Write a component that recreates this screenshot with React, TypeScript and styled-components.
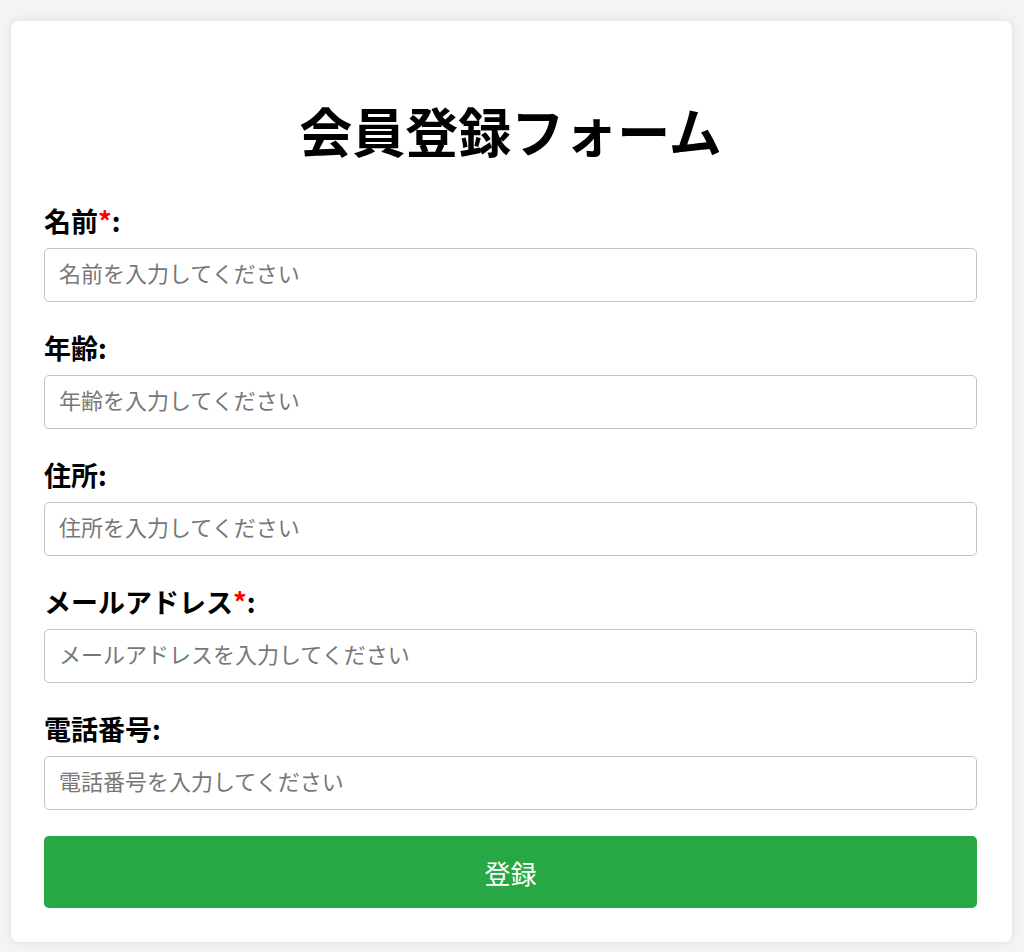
import React from 'react';
import styled, { createGlobalStyle } from 'styled-components';

const GlobalStyle = createGlobalStyle`
  body {
    margin: 0;
    background-color: #f4f4f4;
    font-family: "Noto Sans CJK JP", "Noto Sans", sans-serif;
    color: #000;
  }
`;

const Card = styled.div`
  box-sizing: border-box;
  width: 1001px;
  margin: 21px 12px 10px 11px;
  padding: 32px 35px 34px 33px;
  background-color: #fff;
  border-radius: 8px;
  box-shadow: 0 0 10px rgba(0, 0, 0, 0.1);
`;

const Title = styled.h1`
  margin: 40px 0 36px;
  font-size: 53px;
  line-height: 75px;
  font-weight: 700;
  text-align: center;
`;

const Form = styled.form`
  display: flex;
  flex-direction: column;
`;

const Field = styled.div`
  display: flex;
  flex-direction: column;
  gap: 10px;
  margin-bottom: 29px;

  &:last-of-type {
    margin-bottom: 26px;
  }
`;

const Label = styled.label`
  font-size: 27px;
  line-height: 34px;
  font-weight: 700;
`;

const Required = styled.span`
  color: #ff0000;
`;

const Input = styled.input`
  box-sizing: border-box;
  width: 100%;
  height: 54px;
  padding: 0 14px 6px;
  border: 1px solid #c4c4c4;
  border-radius: 5px;
  font-family: inherit;
  font-size: 22px;
  color: #000;
  background: #fff;

  &::placeholder {
    color: #777;
  }
`;

const Submit = styled.button`
  height: 72px;
  border: none;
  border-radius: 5px;
  background-color: #28a745;
  color: #fff;
  font-family: inherit;
  font-size: 26px;
  cursor: pointer;
`;

interface FieldDef {
  id: string;
  label: string;
  required?: boolean;
  type: string;
}

const fields: FieldDef[] = [
  { id: 'name', label: '名前', required: true, type: 'text' },
  { id: 'age', label: '年齢', type: 'number' },
  { id: 'address', label: '住所', type: 'text' },
  { id: 'email', label: 'メールアドレス', required: true, type: 'email' },
  { id: 'phone', label: '電話番号', type: 'tel' },
];

export default function App() {
  return (
    <>
      <GlobalStyle />
      <Card>
        <Title>会員登録フォーム</Title>
        <Form onSubmit={e => e.preventDefault()}>
          {fields.map(field => (
            <Field key={field.id}>
              <Label htmlFor={field.id}>
                {field.label}
                {field.required && <Required>*</Required>}:
              </Label>
              <Input
                id={field.id}
                type={field.type}
                placeholder={`${field.label}を入力してください`}
              />
            </Field>
          ))}
          <Submit type="submit">登録</Submit>
        </Form>
      </Card>
    </>
  );
}
